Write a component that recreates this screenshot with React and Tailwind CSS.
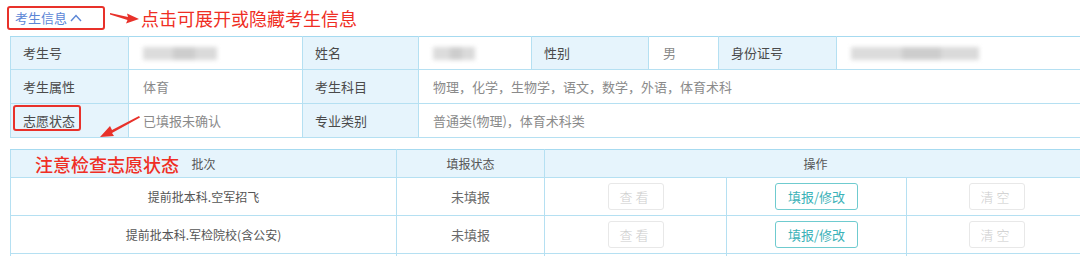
import React from "react";

const FONT = { fontFamily: '"Noto Sans CJK SC", "Noto Sans", "Liberation Sans", sans-serif' };

const lab = "border border-[#b5e0f2] bg-[#e6f4fc] text-[#4a4a4a] text-[13px] px-3 align-middle";
const val = "border border-[#b5e0f2] bg-white text-[#8a8a8a] text-[13px] px-[14px] align-middle";

function Blur({ w }) {
  return (
    <div className="flex items-center blur-[2px]">
      <div className="h-[13px] bg-[#dcdcdc]" style={{ width: w * 0.4 }} />
      <div className="h-[13px] bg-[#cdcdcd]" style={{ width: w * 0.3 }} />
      <div className="h-[13px] bg-[#dadada]" style={{ width: w * 0.3 }} />
    </div>
  );
}

function Btn({ children, active, w }) {
  return (
    <div
      className={
        "mx-auto flex h-[27px] items-center justify-center rounded-[3px] border text-[13px] " +
        (active
          ? "border-[#6fcbcf] text-[#3cb2b8]"
          : "border-[#e8e8e8] text-[#cccccc] font-light tracking-[3px]")
      }
      style={{ width: w }}
    >
      {children}
    </div>
  );
}

export default function App() {
  return (
    <div className="relative h-[256px] w-[1080px] overflow-hidden bg-white" style={FONT}>
      {/* header line */}
      <div className="flex h-[36px] items-start pt-[6px]">
        <div className="ml-[7px] flex h-[24px] w-[98px] items-center rounded-[3px] border-2 border-[#e8312a] pl-[6px] text-[13px] text-[#5b86d6]">
          考生信息
          <svg width="12" height="10" viewBox="0 0 12 10" className="ml-[3px]">
            <path d="M1 8 L6 2.5 L11 8" fill="none" stroke="#5b86d6" strokeWidth="1.4" />
          </svg>
        </div>
        <svg width="30" height="12" viewBox="0 0 30 12" className="ml-[5px] mt-[6px]">
          <polygon points="0,1 18,5 17,1.5 29,7 16,11.5 17.5,8 0,2.5" fill="#e8312a" />
        </svg>
        <div className="ml-[1px] text-[18px] leading-[24px] text-[#ef2e24]">点击可展开或隐藏考生信息</div>
      </div>

      {/* table 1 */}
      <table className="ml-[10px] w-[1076px] table-fixed border-collapse">
        <colgroup>
          <col style={{ width: 118 }} />
          <col style={{ width: 174 }} />
          <col style={{ width: 116 }} />
          <col style={{ width: 113 }} />
          <col style={{ width: 117 }} />
          <col style={{ width: 70 }} />
          <col style={{ width: 118 }} />
          <col style={{ width: 250 }} />
        </colgroup>
        <tbody>
          <tr className="h-[33px]">
            <td className={lab + " border-t-[#a6daf0]"}>考生号</td>
            <td className={val + " border-t-[#a6daf0]"}>
              <Blur w={74} />
            </td>
            <td className={lab + " border-t-[#a6daf0]"}>姓名</td>
            <td className={val + " border-t-[#a6daf0]"}>
              <Blur w={42} />
            </td>
            <td className={lab + " border-t-[#a6daf0]"}>性别</td>
            <td className={val + " border-t-[#a6daf0]"}>男</td>
            <td className={lab + " border-t-[#a6daf0]"}>身份证号</td>
            <td className={val + " border-t-[#a6daf0]"}>
              <Blur w={128} />
            </td>
          </tr>
          <tr className="h-[34px]">
            <td className={lab}>考生属性</td>
            <td className={val}>体育</td>
            <td className={lab}>考生科目</td>
            <td className={val} colSpan={5}>
              物理，化学，生物学，语文，数学，外语，体育术科
            </td>
          </tr>
          <tr className="h-[34px]">
            <td className={lab + " relative"}>
              <span className="absolute left-[2px] top-[1px] h-[26px] w-[68px] rounded-[3px] border-2 border-[#e8312a]" />
              志愿状态
            </td>
            <td className={val}>已填报未确认</td>
            <td className={lab}>专业类别</td>
            <td className={val} colSpan={5}>
              普通类(物理)，体育术科类
            </td>
          </tr>
        </tbody>
      </table>

      {/* arrow 2 */}
      <svg width="44" height="26" viewBox="0 0 44 26" className="absolute left-[98px] top-[114px]">
        <polygon points="41,2 14,16 12,12 2,23 16,22 14,19 42,3.5" fill="#e8312a" />
      </svg>

      {/* table 2 */}
      <table className="ml-[10px] mt-[11px] w-[1076px] table-fixed border-collapse">
        <colgroup>
          <col style={{ width: 386 }} />
          <col style={{ width: 148 }} />
          <col style={{ width: 182 }} />
          <col style={{ width: 180 }} />
          <col style={{ width: 180 }} />
        </colgroup>
        <tbody>
          <tr className="h-[28px] bg-[#e6f4fc] text-[12px] text-[#555]">
            <td className="relative border border-[#b5e0f2] border-t-[#a6daf0] text-center">
              <span className="absolute left-[24px] top-[2px] text-[18px] font-medium leading-[24px] text-[#ef2e24]">
                注意检查志愿状态
              </span>
              批次
            </td>
            <td className="border border-[#b5e0f2] border-t-[#a6daf0] text-center">填报状态</td>
            <td className="border border-[#b5e0f2] border-t-[#a6daf0] text-center" colSpan={3}>
              操作
            </td>
          </tr>
          {["提前批本科.空军招飞", "提前批本科.军检院校(含公安)", ""].map((n, i) => (
            <tr key={i} className="h-[38px] text-[12px] text-[#555]">
              <td className="border border-[#b5e0f2] text-center">{n}</td>
              <td className="border border-[#b5e0f2] text-center text-[13px] text-[#6a6a6a]">{n ? "未填报" : ""}</td>
              <td className="border border-[#b5e0f2]">{n && <Btn w={56}>查看</Btn>}</td>
              <td className="border border-[#b5e0f2]">
                {n && (
                  <Btn active w={83}>
                    填报/修改
                  </Btn>
                )}
              </td>
              <td className="border border-[#b5e0f2]">{n && <Btn w={56}>清空</Btn>}</td>
            </tr>
          ))}
        </tbody>
      </table>
    </div>
  );
}
